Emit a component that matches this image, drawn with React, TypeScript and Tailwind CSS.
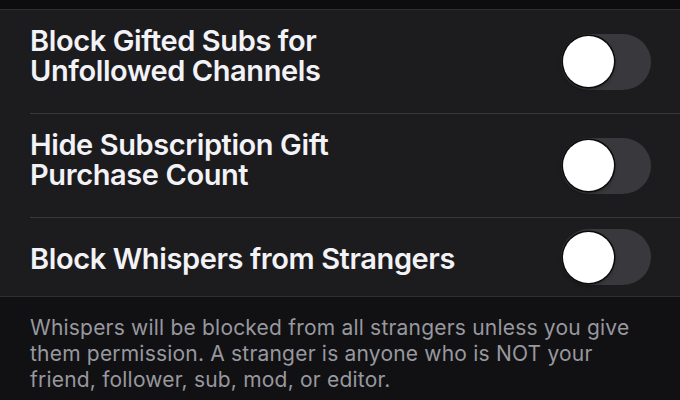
const rows = [
  { title: ["Block Gifted Subs for", "Unfollowed Channels"], last: false },
  { title: ["Hide Subscription Gift", "Purchase Count"], last: false },
  { title: ["Block Whispers from Strangers"], last: true },
]

function Toggle() {
  return (
    <div className="flex h-[56px] w-[90px] shrink-0 items-center rounded-full bg-[#39393d] pl-[2px]">
      <div className="h-[51px] w-[51px] rounded-full bg-white shadow-[0_0_0_1.5px_#0b0b0c,0_2px_4px_rgba(0,0,0,0.4)]" />
    </div>
  )
}

export default function App() {
  return (
    <div className="h-[400px] w-[680px] overflow-hidden bg-[#111113] font-['Inter','Noto_Sans',sans-serif]">
      <div className="h-[10px] border-b border-[#2e2e31] bg-[#0d0d0f]" />
      <div className="bg-[#1c1c1e]">
        {rows.map((r, i) => (
          <div key={i} className="pl-[30px]">
            <div
              className={`flex items-center justify-between pr-[29px] ${
                r.last ? "" : "border-b border-[#38383a]"
              }`}
            >
              <div
                className={`${
                  r.last ? "pt-[26px] pb-[22px]" : "pt-[16px] pb-[27px]"
                } text-[29px] font-semibold leading-[30px] tracking-[-0.4px] text-[#f2f2f7]`}
              >
                {r.title.map((t) => (
                  <div key={t}>{t}</div>
                ))}
              </div>
              <Toggle />
            </div>
          </div>
        ))}
      </div>
      <div className="border-t border-[#2e2e31] px-[30px] pt-[18px] text-[21px] leading-[26px] tracking-[0.2px] text-[#98989f]">
        Whispers will be blocked from all strangers unless you give them permission. A stranger is anyone who is NOT your friend, follower, sub, mod, or editor.
      </div>
    </div>
  )
}
